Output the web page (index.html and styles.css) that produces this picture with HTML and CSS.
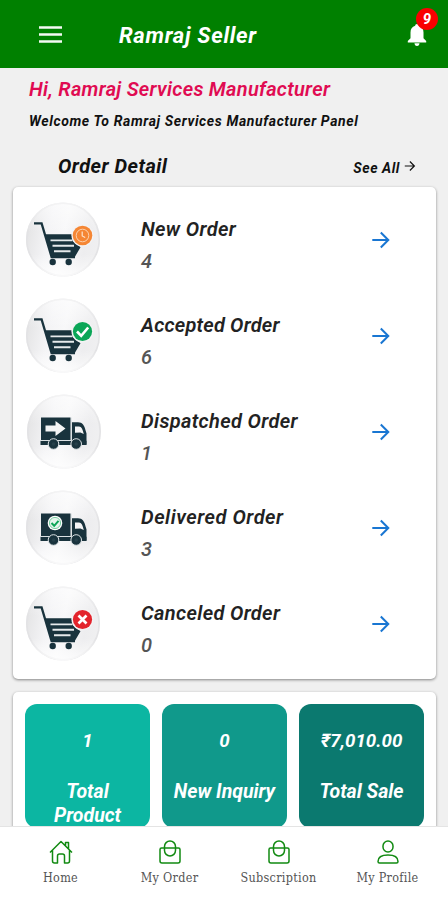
FILE: index.html
```html
<!DOCTYPE html>
<html lang="en">
<head>
<meta charset="utf-8">
<meta name="viewport" content="width=device-width, initial-scale=1">
<title>Ramraj Seller</title>
<link rel="stylesheet" href="styles.css">
</head>
<body>
<svg class="defs" width="0" height="0" aria-hidden="true">
  <defs>
    <linearGradient id="disc" x1="0" y1="0.4" x2="1" y2="0.6">
      <stop offset="0" stop-color="#e4e4e5"/>
      <stop offset=".3" stop-color="#f4f4f6"/>
      <stop offset=".5" stop-color="#f8f8f9"/>
      <stop offset=".8" stop-color="#ededef"/>
      <stop offset="1" stop-color="#f0f0f1"/>
    </linearGradient>
    <linearGradient id="shine" x1="0" y1="0" x2="0" y2="1">
      <stop offset="0" stop-color="#fff" stop-opacity=".6"/>
      <stop offset=".4" stop-color="#fff" stop-opacity="0"/>
      <stop offset=".7" stop-color="#fff" stop-opacity="0"/>
      <stop offset="1" stop-color="#fff" stop-opacity=".8"/>
    </linearGradient>
    <symbol id="plate" viewBox="0 0 76 76">
      <circle cx="38" cy="37.500" r="37" fill="url(#disc)"/>
      <circle cx="38" cy="37.500" r="36.200" fill="none" stroke="#e3e3e5" stroke-width="1.600"/>
      <circle cx="38" cy="37.500" r="37.200" fill="url(#shine)"/>
    </symbol>
    <symbol id="cart" viewBox="0 0 76 76">
      <path d="M9 22.400h7.600L26.600 56H50" fill="none" stroke="#19333d" stroke-width="2.300"/>
      <path d="M20 33.300h26.500l1.500 7 7.500 6-6 10.200H26.500z" fill="#19333d"/>
      <path d="M25.500 39.400h22M27.500 44.800h21.500M29 50.300h16.500" stroke="#e6eaeb" stroke-width="1.900"/>
      <circle cx="27.700" cy="61" r="3.200" fill="#19333d"/>
      <circle cx="43.700" cy="61" r="3.200" fill="#19333d"/>
      <circle cx="57.500" cy="34.500" r="11" fill="#f3f3f4"/>
    </symbol>
    <symbol id="truck" viewBox="0 0 76 76">
      <path d="M16 23.500h29.500v22.500H16z" fill="#19333d"/>
      <path d="M46.800 28.300h6.200c4.500 0 6.500 3.500 7.500 8l1 3.200v11H46.800z" fill="#19333d"/>
      <path d="M50 32.500h4c2.500 0 3.800 3 4.800 7.600l-3.400-1.500-5.400.2z" fill="#f4f4f5"/>
      <path d="M15.500 46.800h46v4.200h-46z" fill="#19333d"/>
      <path d="M15.500 46.500h31v-23" fill="none" stroke="#dfe4e6" stroke-width=".9"/>
      <circle cx="28.500" cy="50" r="5.300" fill="#19333d" stroke="#dfe4e6" stroke-width="1"/>
      <circle cx="51.200" cy="50" r="5.300" fill="#19333d" stroke="#dfe4e6" stroke-width="1"/>
      <circle cx="28.500" cy="50" r="1.800" fill="#26404a"/>
      <circle cx="51.200" cy="50" r="1.800" fill="#26404a"/>
    </symbol>
    <symbol id="arrow" viewBox="0 0 20 20">
      <path d="M1.300 10H17M9.800 2.500l7.500 7.500-7.500 7.500" fill="none" stroke="currentColor" stroke-width="2"/>
    </symbol>
    <symbol id="bag" viewBox="0 0 24 24">
      <path d="M3.500 8h17A1.500 1.500 0 0 1 22 9.500V21a2 2 0 0 1-2 2H4a2 2 0 0 1-2-2V9.500A1.500 1.500 0 0 1 3.500 8z"/>
      <rect x="6.500" y="1" width="11" height="15" rx="5.500"/>
    </symbol>
  </defs>
</svg>

<div class="screen">
  <header class="topbar">
    <svg class="menu" viewBox="0 0 23 17"><path d="M0 1.500h23M0 8.500h23M0 15.500h23" stroke="#f4faf4" stroke-width="2.600"/></svg>
    <h1 class="brand">Ramraj Seller</h1>
    <div class="alerts">
      <svg class="bell" viewBox="0 0 20 24"><path d="M10 1c1.100 0 1.800.7 1.800 1.800 3.200.8 4.700 3.300 4.700 6.700v5.800l2.700 2.700v1.500H.8V18l2.700-2.700V9.500c0-3.400 1.500-5.900 4.700-6.700C8.200 1.700 8.900 1 10 1zM7.500 20.300h5c0 1.600-1 2.600-2.500 2.600s-2.500-1-2.500-2.600z" fill="#fff"/></svg>
      <span class="count">9</span>
    </div>
  </header>

  <main class="content">
    <p class="greeting">Hi, Ramraj Services Manufacturer</p>
    <p class="welcome">Welcome To Ramraj Services Manufacturer Panel</p>
    <div class="section-head">
      <h2 class="section-title">Order Detail</h2>
      <span class="see-all">See All <svg class="mini-arrow"><use href="#arrow"/></svg></span>
    </div>

    <section class="card orders">
      <div class="order">
        <svg class="badge" viewBox="0 0 76 76"><use href="#plate"/><use href="#cart" y="-1"/><circle cx="57.500" cy="33.500" r="9.800" fill="#f58634"/><circle cx="57.500" cy="33.500" r="6.300" fill="none" stroke="#fbd0ac" stroke-width="1"/><path d="M57.200 29.500v4.500l3 1.500" fill="none" stroke="#fde3cd" stroke-width="1.200"/></svg>
        <div class="info"><h3 class="name">New Order</h3><p class="qty">4</p></div>
        <svg class="go"><use href="#arrow"/></svg>
      </div>
      <div class="order">
        <svg class="badge" viewBox="0 0 76 76"><use href="#plate"/><use href="#cart" y="-1"/><circle cx="57.500" cy="33.500" r="9.600" fill="#0ba657"/><path d="M52 33.500l4.200 4.300 7-8.300" fill="none" stroke="#fff" stroke-width="2.600"/></svg>
        <div class="info"><h3 class="name accepted">Accepted Order</h3><p class="qty">6</p></div>
        <svg class="go"><use href="#arrow"/></svg>
      </div>
      <div class="order">
        <svg class="badge" viewBox="0 0 76 76"><use href="#plate" x="1"/><use href="#truck"/><path d="M20.500 31.500h10v-4.500l10 7.500-10 7.500v-4.500h-10z" fill="#f4f5f5"/></svg>
        <div class="info"><h3 class="name">Dispatched Order</h3><p class="qty">1</p></div>
        <svg class="go"><use href="#arrow"/></svg>
      </div>
      <div class="order">
        <svg class="badge" viewBox="0 0 76 76"><use href="#plate"/><use href="#truck"/><circle cx="30" cy="33" r="7.300" fill="#fff"/><circle cx="30" cy="33" r="5.600" fill="#e4f5ec" stroke="#5bc08c" stroke-width=".8"/><path d="M26.500 33l2.700 2.800 4.300-5" fill="none" stroke="#0ba657" stroke-width="2"/></svg>
        <div class="info"><h3 class="name delivered">Delivered Order</h3><p class="qty">3</p></div>
        <svg class="go"><use href="#arrow"/></svg>
      </div>
      <div class="order">
        <svg class="badge" viewBox="0 0 76 76"><use href="#plate"/><use href="#cart" y="-1"/><circle cx="57.500" cy="33.500" r="9.600" fill="#e3242c"/><path d="M53.500 29.500l8 8M61.500 29.500l-8 8" fill="none" stroke="#fff" stroke-width="2.700"/></svg>
        <div class="info"><h3 class="name">Canceled Order</h3><p class="qty">0</p></div>
        <svg class="go"><use href="#arrow"/></svg>
      </div>
    </section>

    <section class="card stats">
      <div class="tile tile-product"><span class="value">1</span><span class="label">Total Product</span></div>
      <div class="tile tile-inquiry"><span class="value">0</span><span class="label">New Inquiry</span></div>
      <div class="tile tile-sale"><span class="value">₹7,010.00</span><span class="label">Total Sale</span></div>
    </section>
  </main>

  <nav class="tabs">
    <a class="tab"><svg class="tab-icon" viewBox="0 0 24 24"><path d="M1 12.500L12 1.500l11 11M3.500 10.500V21a2 2 0 0 0 2 2h3v-7a2 2 0 0 1 2-2h3a2 2 0 0 1 2 2v7h3a2 2 0 0 0 2-2V10.500M16.500 5.500V2.500h3v6.300"/></svg><span class="tab-label">Home</span></a>
    <a class="tab"><svg class="tab-icon"><use href="#bag"/></svg><span class="tab-label">My Order</span></a>
    <a class="tab"><svg class="tab-icon"><use href="#bag"/></svg><span class="tab-label">Subscription</span></a>
    <a class="tab"><svg class="tab-icon" viewBox="0 0 24 24"><rect x="7" y="1" width="10" height="11" rx="5"/><path d="M2 21.500c0-4.200 4-6.500 10-6.500s10 2.300 10 6.500c0 1-.5 1.500-1.500 1.500h-17C2.500 23 2 22.500 2 21.500z"/></svg><span class="tab-label">My Profile</span></a>
  </nav>
</div>
</body>
</html>
```
FILE: styles.css
```css
* { box-sizing: border-box; margin: 0; padding: 0; }
body { background: #f0f0f0; font-family: Roboto, "Liberation Sans", sans-serif; font-style: italic; font-weight: 700; color: #111; }
svg { display: block; flex: none; }
.defs { position: absolute; }
.screen { width: 448px; height: 900px; display: flex; flex-direction: column; overflow: hidden; }

.topbar { flex: none; height: 68px; background: #008000; display: flex; align-items: center; padding: 0 11px 0 39px; }
.menu { width: 23px; height: 17px; }
.brand { margin: 3px 0 0 57px; font-size: 22px; line-height: 30px; letter-spacing: .7px; color: #fff; }
.alerts { position: relative; width: 30px; height: 40px; margin-left: auto; }
.bell { width: 20px; height: 24px; margin-top: 9px; }
.count { position: absolute; left: 9px; top: -6px; width: 22px; height: 22px; border-radius: 50%; background: #f90000; color: #fff; font-size: 15px; line-height: 23px; text-align: center; }

.content { flex: 1; min-height: 0; overflow: hidden; padding: 0 12px 0 13px; white-space: nowrap; }
.greeting { margin: 6px 0 0 16px; font-size: 20px; line-height: 30px; font-weight: 600; letter-spacing: .27px; color: #e00b52; }
.welcome { margin: 7px 0 0 16px; font-size: 14px; line-height: 20px; letter-spacing: .62px; }
.section-head { height: 56px; display: flex; align-items: center; justify-content: space-between; padding: 14px 20px 0 45px; }
.section-title { font-size: 20px; line-height: 24px; letter-spacing: .45px; }
.see-all { display: flex; align-items: center; margin-top: 3px; font-size: 14px; line-height: 20px; letter-spacing: .55px; gap: 4px; }
.mini-arrow { width: 12px; height: 12px; margin-top: -3px; }

.card { background: #fff; border-radius: 5px; box-shadow: 0 1px 3px rgba(0, 0, 0, .45); }
.orders { height: 492px; padding-top: 5px; }
.order { height: 96px; display: flex; align-items: center; padding: 0 45px 0 12px; }
.badge { width: 76px; height: 76px; }
.info { flex: 1; padding: 9px 0 0 40px; }
.name { font-size: 20px; line-height: 28px; font-weight: 600; letter-spacing: .35px; color: #222; }
.accepted { letter-spacing: .2px; }
.delivered { letter-spacing: .52px; }
.qty { margin-top: 4px; font-size: 20px; line-height: 28px; font-weight: 500; color: #555; }
.go { width: 20px; height: 20px; margin-top: -1px; color: #1976d2; }

.stats { margin-top: 13px; height: 170px; padding: 12px 12px; display: grid; grid-template-columns: repeat(3, 1fr); gap: 12px; }
.tile { height: 124px; border-radius: 12px; color: #fff; text-align: center; font-size: 19.500px; line-height: 24px; padding-top: 25px; display: flex; flex-direction: column; align-items: center; gap: 27px; }
.value { font-size: 18.700px; }
.tile-product { background: #0cb6a2; }
.tile-product .label { width: 80px; white-space: normal; }
.tile-inquiry { background: #10998b; }
.tile-sale { background: #0b796f; }

.tabs { flex: none; height: 74px; background: #fff; border-top: 1px solid #e4e4e4; display: grid; grid-template-columns: repeat(4, 109px); justify-content: center; padding: 13px 0 0; }
.tab { display: flex; flex-direction: column; align-items: center; }
.tab-icon { width: 24px; height: 24px; fill: none; stroke: #128a12; stroke-width: 1.500; stroke-linejoin: round; }
.tab-label { margin-top: 5px; font: normal 12.500px/17px "DejaVu Serif Condensed", "DejaVu Serif", serif; letter-spacing: .3px; color: #555; }
```
